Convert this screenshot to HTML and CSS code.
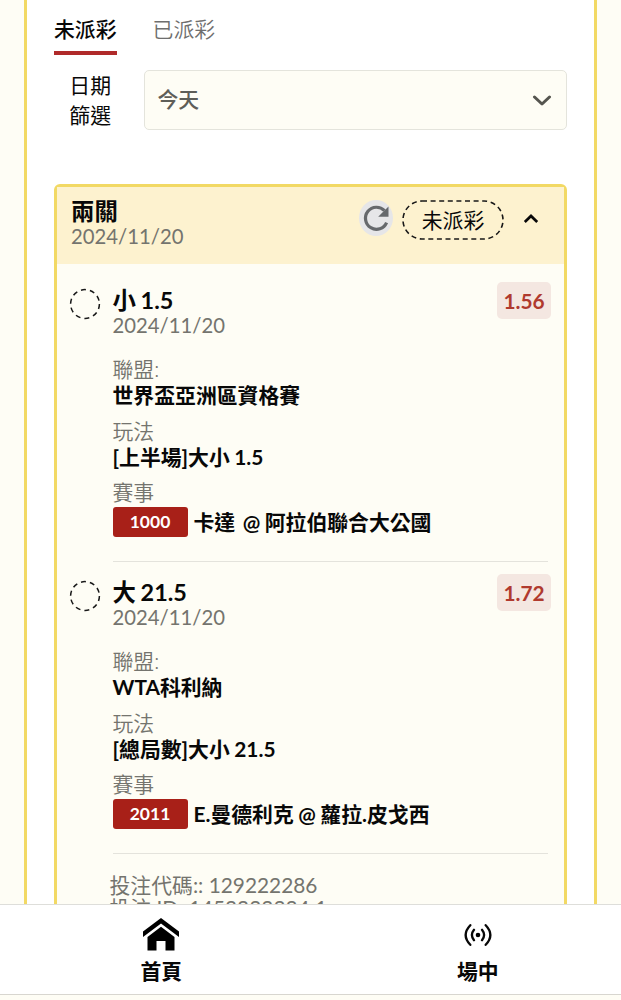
FILE: index.html
```html
<!DOCTYPE html>
<html lang="zh-Hant">
<head>
<meta charset="utf-8">
<meta name="viewport" content="width=device-width, initial-scale=1">
<title>未派彩</title>
<link rel="stylesheet" href="styles.css">
</head>
<body>
<div class="app">
  <main class="viewport">
    <section class="panel">
      <nav class="tabs">
        <span class="tab tab-active">未派彩</span>
        <span class="tab">已派彩</span>
      </nav>
      <div class="filter">
        <div class="filter-label">日期<br>篩選</div>
        <div class="select">
          <span>今天</span>
          <svg class="select-arrow" viewBox="0 0 20 12" width="20" height="12"><path d="M2.5 2 L10 9 L17.5 2"/></svg>
        </div>
      </div>
      <article class="card">
        <header class="card-head">
          <div class="card-title">
            <h2 class="title">兩關</h2>
            <div class="date">2024/11/20</div>
          </div>
          <span class="refresh">
            <svg viewBox="0 0 34 36" width="34" height="36"><path class="refresh-arc" d="M27.6 22.6 A11 11 0 1 1 25.5 10.7"/><path class="refresh-tip" d="M29.5 6.5 V16.8 H19.2 Z"/></svg>
          </span>
          <span class="status">
            <svg class="status-outline" viewBox="0 0 102 40" width="102" height="40"><rect x="1" y="1" width="100" height="38" rx="19"/></svg>
            <span class="status-text">未派彩</span>
          </span>
          <svg class="collapse" viewBox="0 0 16 12" width="16" height="12"><path d="M1.8 9 L8 3 L14.2 9"/></svg>
        </header>
        <div class="card-body">
          <section class="leg">
            <svg class="ring" viewBox="0 0 32 32" width="32" height="32"><circle cx="16" cy="16" r="14.4"/></svg>
            <div class="leg-main">
              <div class="leg-head">
                <div class="leg-title"><h3 class="title">小 1.5</h3><div class="date">2024/11/20</div></div>
                <span class="odds">1.56</span>
              </div>
              <dl class="facts">
                <div class="fact"><dt>聯盟:</dt><dd>世界盃亞洲區資格賽</dd></div>
                <div class="fact"><dt>玩法</dt><dd>[上半場]大小 1.5</dd></div>
                <div class="fact"><dt>賽事</dt><dd class="match"><span class="code">1000</span><span class="teams">卡達 <span class="at">@</span> 阿拉伯聯合大公國</span></dd></div>
              </dl>
            </div>
          </section>
          <section class="leg">
            <svg class="ring" viewBox="0 0 32 32" width="32" height="32"><circle cx="16" cy="16" r="14.4"/></svg>
            <div class="leg-main">
              <div class="leg-head">
                <div class="leg-title"><h3 class="title">大 21.5</h3><div class="date">2024/11/20</div></div>
                <span class="odds">1.72</span>
              </div>
              <dl class="facts">
                <div class="fact"><dt>聯盟:</dt><dd>WTA科利納</dd></div>
                <div class="fact"><dt>玩法</dt><dd>[總局數]大小 21.5</dd></div>
                <div class="fact"><dt>賽事</dt><dd class="match"><span class="code">2011</span><span class="teams">E.曼德利克 @ 蘿拉.皮戈西</span></dd></div>
              </dl>
            </div>
          </section>
          <footer class="bet-meta">
            <div>投注代碼:: 129222286</div>
            <div class="bet-id">投注 ID: 1452222224 1</div>
          </footer>
        </div>
      </article>
    </section>
  </main>
  <nav class="bottom-nav">
    <a class="nav-item">
      <svg viewBox="0 0 36 33" width="36" height="33"><path d="M18 0 L36 13.5 V19 L18 5.5 L0 19 V13.5 Z"/><path d="M18 8.8 L31.5 19 V32.5 H22.5 V23 H13.5 V32.5 H4.5 V19 Z"/></svg>
      <span>首頁</span>
    </a>
    <a class="nav-item">
      <svg class="live" viewBox="0 0 30 33" width="30" height="33"><circle cx="15" cy="17" r="2.3"/><path d="M11 11.8 Q6.8 17 11 22.2 M19 11.8 Q23.2 17 19 22.2 M7.3 7.2 Q-2 17 7.3 26.8 M22.7 7.2 Q32 17 22.7 26.8"/></svg>
      <span>場中</span>
    </a>
  </nav>
</div>
</body>
</html>
```
FILE: styles.css
```css
* { box-sizing: border-box; }
body {
  margin: 0;
  background: #fefdf5;
  color: #080808;
  font-family: Lato, "Noto Sans CJK TC", sans-serif;
  font-size: 20.85px;
  line-height: 25px;
}
h2, h3, dl, dd { margin: 0; }
svg { display: block; flex: none; }
.app { height: 1000px; display: flex; flex-direction: column; overflow: hidden; }
.viewport { height: 904px; flex: none; overflow: hidden; padding: 0 24px; }
.panel {
  height: 1100px;
  padding: 15px 27px 0;
  background: #fff;
  border: solid #f2d964;
  border-width: 0 3px;
}
.tabs { display: flex; gap: 36px; height: 40px; }
.tab { color: #6e6e6e; line-height: 28px; font-weight: 350; }
.tab-active { color: #080808; font-weight: 500; border-bottom: 4.5px solid #b02a2a; }
.filter { display: flex; margin-top: 15px; gap: 33px; height: 60px; }
.filter-label { width: 57px; text-align: right; line-height: 30px; white-space: nowrap; }
.select {
  flex: 1;
  display: flex;
  align-items: center;
  justify-content: space-between;
  padding: 0 14px 0 12.5px;
  background: #fefdf5;
  border: 1.5px solid #e4e4dc;
  border-radius: 5px;
  color: #5e5e58;
}
.select span { margin-top: -3px; font-weight: 500; }
.select-arrow { fill: none; stroke: #55554f; stroke-width: 3; stroke-linecap: round; stroke-linejoin: round; margin-top: 1px; }
.card {
  margin-top: 54px;
  height: 860px;
  border: 3px solid #f2d964;
  border-radius: 6px;
  background: #fefdf5;
}
.card-head { display: flex; height: 77px; padding: 13px 25px 0 14px; background: #fdf2cf; }
.card-title { flex: 1; margin-top: -2px; }
.title { font-size: 23.4px; line-height: 26px; font-weight: 700; word-spacing: -1px; }
.date { color: #74746e; line-height: 25px; font-size: 20.3px; }
.refresh { width: 34px; height: 36px; background: #e6e6e8; border-radius: 50%; margin-right: 9px; }
.refresh-arc { fill: none; stroke: #66696c; stroke-width: 3.2; }
.refresh-tip { fill: #66696c; }
.status { display: grid; width: 102px; height: 40px; margin-right: 19px; }
.status > * { grid-area: 1 / 1; }
.status-outline rect { fill: none; stroke: #181818; stroke-width: 1.6; stroke-dasharray: 5 3.6; }
.status-text { text-align: center; line-height: 40px; }
.collapse { margin-top: 13px; fill: none; stroke: #080808; stroke-width: 2.7; }
.card-body { padding: 6px 13px 0 12px; }
.leg { display: flex; gap: 11.5px; height: 292px; }
.ring { margin-top: 18px; fill: none; stroke: #181818; stroke-width: 1.5; stroke-dasharray: 5 4.05; }
.leg-main { flex: 1; padding-top: 12px; border-bottom: 1.5px solid #e4e3dc; margin-right: 3px; }
.leg-head { display: flex; justify-content: space-between; height: 75px; margin-right: -3px; }
.leg-title { padding-top: 5px; }
.odds {
  width: 54px;
  height: 37px;
  line-height: 37px;
  border-radius: 5px;
  text-align: center;
  font-weight: 700;
  background: #f4e7e1;
  color: #b03a2e;
}
.facts { display: flex; flex-direction: column; gap: 11px; margin-top: -1px; }
.fact dt { color: #74746e; font-weight: 350; }
.fact dd { font-weight: 700; line-height: 27px; margin-bottom: -1.5px; word-spacing: -0.6px; }
.fact .match { display: flex; align-items: center; gap: 6px; line-height: 30px; margin-top: 3px; }
.code {
  width: 75px;
  height: 30px;
  background: #a82018;
  border-radius: 3px;
  color: #fff;
  text-align: center;
  font-size: 17.5px;
}
.teams { white-space: pre; }
.at { margin: 0 0 0 3px; }
.bet-meta { padding: 20px 0 0 40.5px; color: #74746e; line-height: 22.5px; }
.bottom-nav {
  display: grid;
  grid-template-columns: 1fr 1fr;
  height: 91px;
  flex: none;
  background: #fff;
  border-top: 1.5px solid #dededa;
  border-bottom: 1.5px solid #d8d6d0;
}
.nav-item { display: flex; flex-direction: column; align-items: center; padding-top: 13px; font-weight: 700; gap: 7px; }
.nav-item:first-child { padding-left: 12px; }
.nav-item:last-child { padding-left: 24px; }
.live path { fill: none; stroke: #080808; stroke-width: 2.3; stroke-linecap: round; }
```
